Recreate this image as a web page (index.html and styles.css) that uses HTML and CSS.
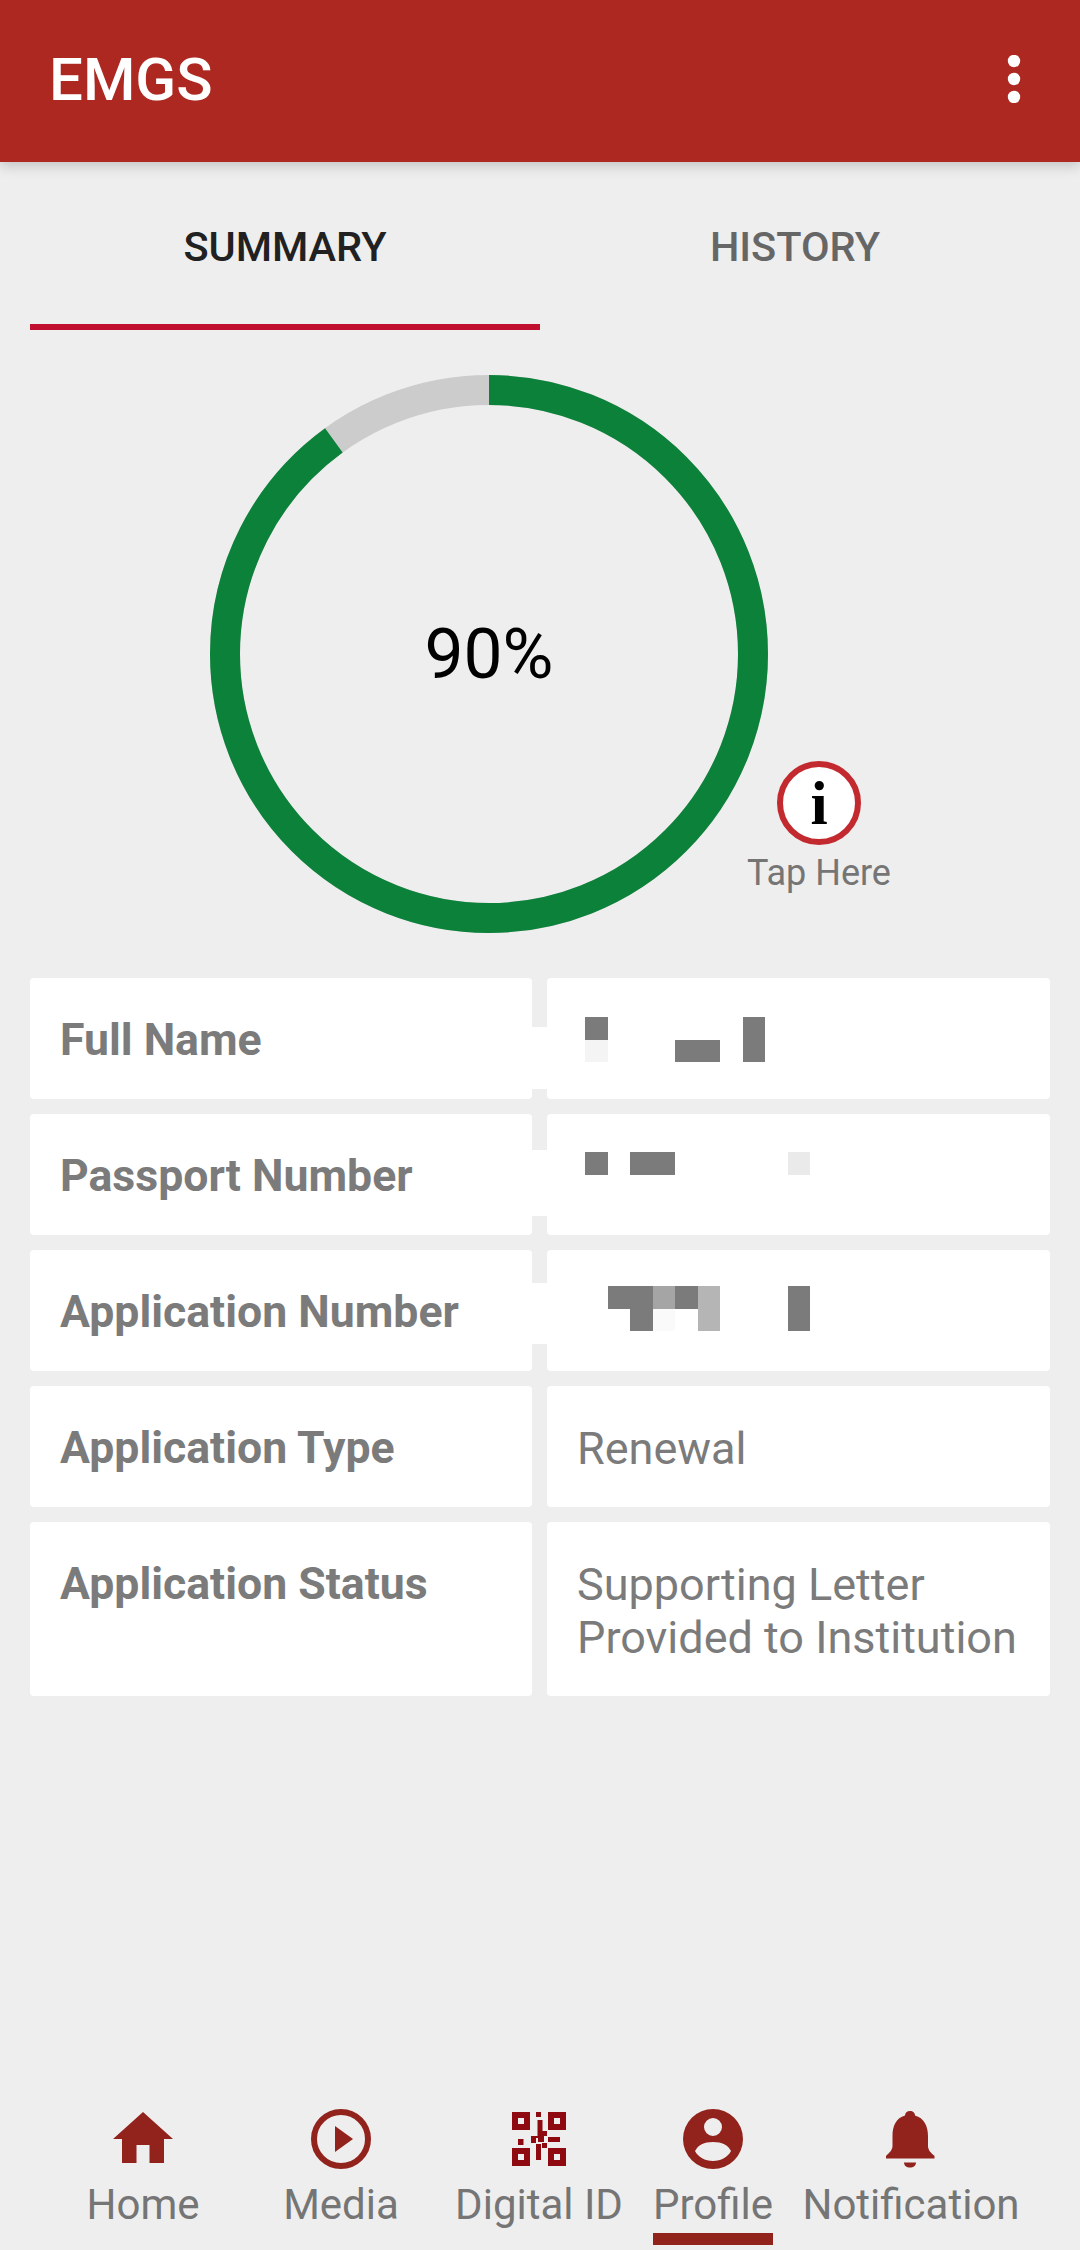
FILE: index.html
```html
<!DOCTYPE html>
<html lang="en">
<head>
  <meta charset="UTF-8">
  <meta name="viewport" content="width=device-width, initial-scale=1.0">
  <title>EMGS</title>
  <link rel="stylesheet" href="styles.css">
</head>
<body>
  <header class="appbar">
    <span class="appbar-title">EMGS</span>
    <svg class="kebab" width="14" height="48" viewBox="0 0 14 48">
      <circle cx="7" cy="6" r="6.2"/><circle cx="7" cy="24" r="6.2"/><circle cx="7" cy="42" r="6.2"/>
    </svg>
  </header>

  <main class="content">
    <div class="tabs">
      <div class="tab active">SUMMARY</div>
      <div class="tab">HISTORY</div>
    </div>

    <div class="progress">
      <svg class="ring" width="558" height="558" viewBox="0 0 558 558">
        <circle class="ring-track" cx="279" cy="279" r="264"/>
        <circle class="ring-value" cx="279" cy="279" r="264" pathLength="100" stroke-dasharray="90 10" transform="rotate(-90 279 279)"/>
      </svg>
      <span class="ring-label">90%</span>
      <div class="tap-here">
        <span class="info-icon">i</span>
        <span class="tap-label">Tap Here</span>
      </div>
    </div>

    <div class="details">
      <div class="cell label">Full Name</div>
      <div class="cell value">
        <span class="patch patch-1"></span>
        <div class="mosaic mosaic-1">
          <i class="dark"></i><i></i><i></i><i></i><i></i><i></i><i></i><i class="dark"></i><i></i><i></i>
          <i class="faint"></i><i></i><i></i><i></i><i class="dark"></i><i class="dark"></i><i></i><i class="dark"></i><i></i><i></i>
        </div>
      </div>
      <div class="cell label">Passport Number</div>
      <div class="cell value">
        <span class="patch patch-2"></span>
        <div class="mosaic mosaic-2">
          <i class="dark"></i><i></i><i class="dark"></i><i class="dark"></i><i></i><i></i><i></i><i></i><i></i><i class="pale"></i>
        </div>
      </div>
      <div class="cell label">Application Number</div>
      <div class="cell value">
        <span class="patch patch-3"></span>
        <div class="mosaic mosaic-3">
          <i></i><i class="dark"></i><i class="dark"></i><i class="mid"></i><i class="dark"></i><i class="soft"></i><i></i><i></i><i></i><i class="dark"></i>
          <i></i><i></i><i class="dark"></i><i class="ghost"></i><i></i><i class="soft"></i><i></i><i></i><i></i><i class="dark"></i>
        </div>
      </div>
      <div class="cell label">Application Type</div>
      <div class="cell value">Renewal</div>
      <div class="cell label tall">Application Status</div>
      <div class="cell value tall">Supporting Letter Provided to Institution</div>
    </div>
  </main>

  <nav class="bottom-nav">
    <div class="nav-item">
      <svg class="nav-icon" width="60" height="60" viewBox="0 0 60 60">
        <path d="M30 3 L60 30 H51 V54 H36.5 V36 H23.5 V54 H9 V30 H0 Z"/>
      </svg>
      <span class="nav-label">Home</span>
    </div>
    <div class="nav-item">
      <svg class="nav-icon" width="60" height="60" viewBox="0 0 60 60">
        <circle cx="30" cy="30" r="27" fill="none" stroke="#92231c" stroke-width="6"/>
        <path d="M24 17 L42 30 L24 43 Z"/>
      </svg>
      <span class="nav-label">Media</span>
    </div>
    <div class="nav-item">
      <svg class="nav-icon qr" width="60" height="60" viewBox="0 0 60 60">
        <path fill-rule="evenodd" d="M3 3 H21 V21 H3 Z M9 9 V15 H15 V9 Z M39 3 H57 V21 H39 Z M45 9 V15 H51 V9 Z M3 39 H21 V57 H3 Z M9 45 V51 H15 V45 Z M39 39 H57 V57 H39 Z M45 45 V51 H51 V45 Z"/>
        <path d="M27 3 H32 V8 H27 Z M28.500 11 H33.500 V22 H38 V27 H35 V33 H29 V29 H27 V34 H22 V27 H28.500 Z M39 28 H51 V33 H39 Z M9 30 H14.500 V36 H9 Z M27 35 H32 V51 H27 Z M33 34 H38 V39 H33 Z"/>
      </svg>
      <span class="nav-label">Digital ID</span>
    </div>
    <div class="nav-item active">
      <svg class="nav-icon" width="60" height="60" viewBox="0 0 60 60">
        <path fill-rule="evenodd" d="M30 0 A30 30 0 1 1 30 60 A30 30 0 1 1 30 0 Z M30 9 A9 9 0 1 0 30 27 A9 9 0 1 0 30 9 Z M30 33 C21 33 15 36 12 42 C15 48 22 52 30 52 C38 52 45 48 48 42 C45 36 39 33 30 33 Z"/>
      </svg>
      <span class="nav-label">Profile</span>
      <span class="nav-underline"></span>
    </div>
    <div class="nav-item">
      <svg class="nav-icon" width="60" height="60" viewBox="0 0 60 60">
        <path d="M29 2 C32 2 34 4 34 6.500 C43 9 47 17 47 27 V37 C47 41 50 44 53.500 47 V49.500 H5 V47 C8 44 11.500 41 11.500 37 V27 C11.500 17 15 9 24 6.500 C24 4 26 2 29 2 Z M23 53.500 H35 C35 56.500 32.500 58.500 29 58.500 C25.500 58.500 23 56.500 23 53.500 Z"/>
      </svg>
      <span class="nav-label">Notification</span>
    </div>
  </nav>
</body>
</html>
```

FILE: styles.css
```css
* {
  box-sizing: border-box;
}
body {
  margin: 0;
  width: 1080px;
  height: 2250px;
  overflow: hidden;
  display: flex;
  flex-direction: column;
  background: #eeeeee;
  font-family: Roboto, sans-serif;
  color: #757575;
}

.appbar {
  height: 162px;
  flex-shrink: 0;
  display: flex;
  justify-content: space-between;
  align-items: center;
  padding: 0 59px 0 49px;
  background: #ad2820;
  box-shadow: 0 4px 12px rgba(0,0,0,0.18);
}
.appbar-title {
  margin-top: -3px;
  color: #fff;
  font-size: 60px;
  font-weight: 500;
}
.kebab {
  margin-top: -4px;
  fill: #fff;
}

.content {
  flex: 1;
  padding: 0 30px;
}

.tabs {
  display: grid;
  grid-template-columns: 1fr 1fr;
}
.tab {
  height: 168px;
  padding-top: 60px;
  text-align: center;
  font-size: 41.5px;
  font-weight: 500;
  color: #666;
}
.tab.active {
  color: #212121;
  border-bottom: 6px solid #c1102f;
}

.progress {
  position: relative;
  height: 648px;
  padding: 45px 0 0 180px;
}
.ring {
  display: block;
  fill: none;
  stroke-width: 30;
}
.ring-track {
  stroke: #cccccc;
}
.ring-value {
  stroke: #0b8139;
}
.ring-label {
  position: absolute;
  left: 180px;
  top: 45px;
  width: 558px;
  height: 558px;
  display: flex;
  align-items: center;
  justify-content: center;
  font-size: 69.5px;
  color: #000;
}
.tap-here {
  position: absolute;
  left: 689px;
  top: 431px;
  width: 200px;
  display: flex;
  flex-direction: column;
  align-items: center;
}
.info-icon {
  width: 84px;
  height: 84px;
  border: 6px solid #c32a30;
  border-radius: 50%;
  background: #fff;
  color: #000;
  display: flex;
  align-items: center;
  justify-content: center;
  font-family: "Liberation Serif", serif;
  font-weight: 700;
  font-size: 62px;
  line-height: 1;
}
.tap-label {
  margin-top: 7px;
  font-size: 36px;
}

.details {
  display: grid;
  grid-template-columns: 502px 503px;
  column-gap: 15px;
  row-gap: 15px;
}
.cell {
  height: 121px;
  padding: 36px 14px 0 30px;
  background: #fff;
  border-radius: 4px;
  font-size: 45px;
  line-height: 53px;
  color: #7b7b7b;
}
.cell.tall {
  height: 174px;
}
.label {
  font-size: 44.6px;
  font-weight: 700;
}
.value {
  position: relative;
}

/* blurred personal data */
.mosaic {
  display: grid;
  grid-template-columns: repeat(10, 22.5px);
  grid-auto-rows: 22.5px;
  margin-left: 8px;
}
.mosaic-1 {
  margin-top: 3px;
}
.mosaic-2 {
  margin-top: 2px;
}
.mosaic-3 {
  margin-top: 0;
}
.mosaic .dark {
  background: #7b7b7b;
}
.mosaic .mid {
  background: #a5a5a5;
}
.mosaic .soft {
  background: #b5b5b5;
}
.mosaic .pale {
  background: #eaeaea;
}
.mosaic .faint {
  background: #f4f4f4;
}
.mosaic .ghost {
  background: #fafafa;
}
.patch {
  position: absolute;
  left: -15px;
  width: 15px;
  background: #fff;
}
.patch-1 {
  top: 49px;
  height: 62px;
}
.patch-2 {
  top: 36px;
  height: 66px;
}
.patch-3 {
  top: 33px;
  height: 61px;
}

.bottom-nav {
  flex-shrink: 0;
  height: 147px;
  padding: 6px 0 0 44px;
  display: grid;
  grid-template-columns: 198px 198px 198px 150px 246px;
}
.nav-item {
  display: flex;
  flex-direction: column;
  align-items: center;
}
.nav-icon {
  display: block;
  fill: #92231c;
}
.nav-icon.qr {
  fill: #8f0a10;
}
.nav-label {
  margin-top: 12px;
  font-size: 42px;
  line-height: 47px;
  white-space: nowrap;
}
.nav-underline {
  width: 120px;
  height: 12px;
  margin-top: 5px;
  background: #92231c;
}
```
